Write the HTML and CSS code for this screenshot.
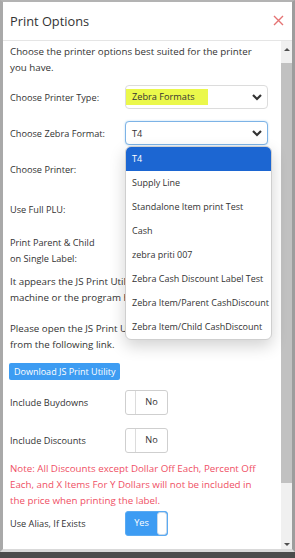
FILE: index.html
```html
<!DOCTYPE html>
<html lang="en">
<head>
    <meta charset="UTF-8">
    <meta name="viewport" content="width=device-width, initial-scale=1.0">
    <title>Print Options</title>
    <link rel="stylesheet" href="styles.css">
</head>
<body>

    <div class="dialog">
        <div class="dialog-header">
            <h4 class="dialog-title">Print Options</h4>
            <button class="close-btn" aria-label="Close">
                <svg width="11" height="11" viewBox="0 0 11 11">
                    <path d="M1 1 L10 10 M10 1 L1 10" stroke="#e57373" stroke-width="1.4" fill="none"/>
                </svg>
            </button>
        </div>

        <div class="dialog-main">
            <div class="dialog-body">
                <p class="intro">Choose the printer options best suited for the printer you have.</p>

                <div class="form-row row-type">
                    <label class="form-label">Choose Printer Type:</label>
                    <div class="select">
                        <span class="select-value highlight">Zebra Formats</span>
                        <svg class="chevron" width="10" height="7" viewBox="0 0 10 7">
                            <polyline points="1,1 5,5 9,1" fill="none" stroke="#333" stroke-width="2.2"/>
                        </svg>
                    </div>
                </div>

                <div class="form-row row-format">
                    <label class="form-label">Choose Zebra Format:</label>
                    <div class="select is-focused">
                        <span class="select-value">T4</span>
                        <svg class="chevron" width="10" height="7" viewBox="0 0 10 7">
                            <polyline points="1,1 5,5 9,1" fill="none" stroke="#333" stroke-width="2.2"/>
                        </svg>
                        <ul class="dropdown">
                            <li class="active">T4</li>
                            <li>Supply Line</li>
                            <li>Standalone Item print Test</li>
                            <li>Cash</li>
                            <li>zebra priti 007</li>
                            <li>Zebra Cash Discount Label Test</li>
                            <li>Zebra Item/Parent CashDiscount</li>
                            <li>Zebra Item/Child CashDiscount</li>
                        </ul>
                    </div>
                </div>

                <div class="form-row row-printer">
                    <label class="form-label">Choose Printer:</label>
                    <div class="select">
                        <span class="select-value"></span>
                    </div>
                </div>

                <div class="form-row row-plu">
                    <label class="form-label">Use Full PLU:</label>
                    <div class="toggle">
                        <span class="toggle-handle"></span>
                        <span class="toggle-text">No</span>
                    </div>
                </div>

                <div class="form-row row-parent">
                    <label class="form-label">Print Parent &amp; Child<br>on Single Label:</label>
                </div>

                <p class="utility-msg">It appears the JS Print Utility is not running on this<br>machine or the program has not been started.<br><br>Please open the JS Print Utility or download it<br>from the following link.</p>

                <div class="download">
                    <a class="btn-download" href="#">Download JS Print Utility</a>
                </div>

                <div class="form-row toggle-row row-buydowns">
                    <label class="form-label">Include Buydowns</label>
                    <div class="toggle">
                        <span class="toggle-handle"></span>
                        <span class="toggle-text">No</span>
                    </div>
                </div>

                <div class="form-row toggle-row row-discounts">
                    <label class="form-label">Include Discounts</label>
                    <div class="toggle">
                        <span class="toggle-handle"></span>
                        <span class="toggle-text">No</span>
                    </div>
                </div>

                <p class="note">Note: All Discounts except Dollar Off Each, Percent Off Each, and X Items For Y Dollars will not be included in the price when printing the label.</p>

                <div class="form-row toggle-row row-alias">
                    <label class="form-label">Use Alias, If Exists</label>
                    <div class="toggle toggle-on">
                        <span class="toggle-text">Yes</span>
                        <span class="toggle-handle"></span>
                    </div>
                </div>
            </div>

            <div class="scrollbar">
                <span class="arrow arrow-up"></span>
                <div class="thumb"></div>
                <span class="arrow arrow-down"></span>
            </div>
        </div>
    </div>

</body>
</html>
```

FILE: styles.css
```css
body {
    margin: 0;
    height: 558px;
    overflow: hidden;
    background-color: #4b4b4b;
    font-family: "Open Sans", Arial, sans-serif;
    font-size: 9.2px;
    color: #333;
}

.dialog {
    box-sizing: border-box;
    width: 295px;
    height: 552px;
    display: flex;
    flex-direction: column;
    background-color: white;
    border-top: 2px solid #b3b3b3;
    border-left: 3px solid #a9a9a9;
    border-right: 3px solid #9d9d9d;
    border-bottom: 3px solid #d9d9d9;
}

.dialog-header {
    height: 38px;
    display: flex;
    align-items: center;
    justify-content: space-between;
    padding: 0 8px 0 7px;
    border-bottom: 1px solid #e5e5e5;
}

.dialog-title {
    margin: 0;
    font-size: 12.8px;
    font-weight: normal;
    color: #333;
}

.close-btn {
    border: none;
    background: none;
    padding: 0;
    margin-top: -2px;
    display: flex;
}

.dialog-main {
    flex: 1;
    display: flex;
    min-height: 0;
}

.dialog-body {
    flex: 1;
    min-width: 0;
    padding: 3px 22px 0 7px;
    line-height: 15.7px;
}

.intro,
.utility-msg,
.note {
    font-size: 9.75px;
}

.intro {
    margin: 0;
}

.form-row {
    display: flex;
    align-items: center;
}

.form-label {
    flex: none;
    width: 115px;
}

.row-type {
    margin-top: 10px;
}

.row-format {
    margin-top: 12px;
}

.row-printer {
    margin-top: 12px;
}

.row-plu {
    margin-top: 16px;
}

.row-parent {
    margin-top: 13px;
}

.select {
    position: relative;
    flex: none;
    box-sizing: border-box;
    width: 143px;
    height: 24px;
    display: flex;
    align-items: center;
    justify-content: space-between;
    padding-right: 5px;
    border: 1px solid #dcdcdc;
    border-radius: 4px;
    background-color: white;
}

.select.is-focused {
    border-color: #7db3e6;
    box-shadow: 0 0 2px rgba(102, 175, 233, 0.5);
}

.select-value {
    padding-left: 6px;
}

.highlight {
    height: 16px;
    line-height: 16px;
    padding-right: 13px;
    background-color: #ebf84b;
}

.dropdown {
    position: absolute;
    z-index: 10;
    top: 24px;
    left: -1px;
    width: 147px;
    margin: 0;
    padding: 0;
    list-style: none;
    box-sizing: border-box;
    background-color: white;
    border: 1px solid #cfcfcf;
    border-radius: 6px;
    overflow: hidden;
    box-shadow: 0 6px 16px rgba(0, 0, 0, 0.18);
}

.dropdown li {
    height: 24px;
    line-height: 24px;
    padding-left: 6px;
    font-size: 9px;
    white-space: nowrap;
}

.dropdown li.active {
    background-color: #1c66d2;
    color: white;
}

.utility-msg {
    margin: 7px 0 0;
}

.download {
    margin-top: 11px;
}

.btn-download {
    display: inline-block;
    margin-left: -1px;
    height: 17px;
    line-height: 17px;
    padding: 0 5px;
    border-radius: 2px;
    background-color: #3d9cf2;
    color: white;
    font-size: 9px;
    text-decoration: none;
}

.toggle-row {
    align-items: flex-start;
}

.toggle-row .form-label {
    padding-top: 5px;
}

.row-buydowns {
    margin-top: 10px;
}

.row-discounts {
    margin-top: 13px;
}

.row-alias {
    margin-top: 3px;
}

.toggle {
    flex: none;
    box-sizing: border-box;
    width: 43px;
    height: 25px;
    display: flex;
    border: 1px solid #cfcfcf;
    border-radius: 3px;
    background-color: white;
}

.toggle-handle {
    width: 9px;
    border-right: 1px solid #dcdcdc;
}

.toggle-text {
    flex: 1;
    display: flex;
    align-items: center;
    justify-content: center;
    margin-top: -2px;
}

.toggle-on {
    background-color: #3d9cf3;
    border-color: #5aaaf2;
}

.toggle-on .toggle-text {
    color: white;
}

.toggle-on .toggle-handle {
    box-sizing: border-box;
    width: 10px;
    border: 1px solid #c9d9ea;
    border-radius: 3px;
    background-color: white;
}

.note {
    margin: 8px 0 0;
    color: #ef5065;
}

.scrollbar {
    flex: none;
    width: 11px;
    display: flex;
    flex-direction: column;
    align-items: center;
    padding-top: 7px;
    box-sizing: border-box;
    background-color: #f0f0f0;
}

.arrow {
    width: 0;
    height: 0;
    border-left: 3px solid transparent;
    border-right: 3px solid transparent;
}

.arrow-up {
    border-bottom: 3px solid #505050;
}

.arrow-down {
    margin-top: auto;
    margin-bottom: 3px;
    border-top: 3px solid #505050;
}

.thumb {
    width: 11px;
    height: 420px;
    margin-top: 12px;
    background-color: #c1c1c1;
}
```
